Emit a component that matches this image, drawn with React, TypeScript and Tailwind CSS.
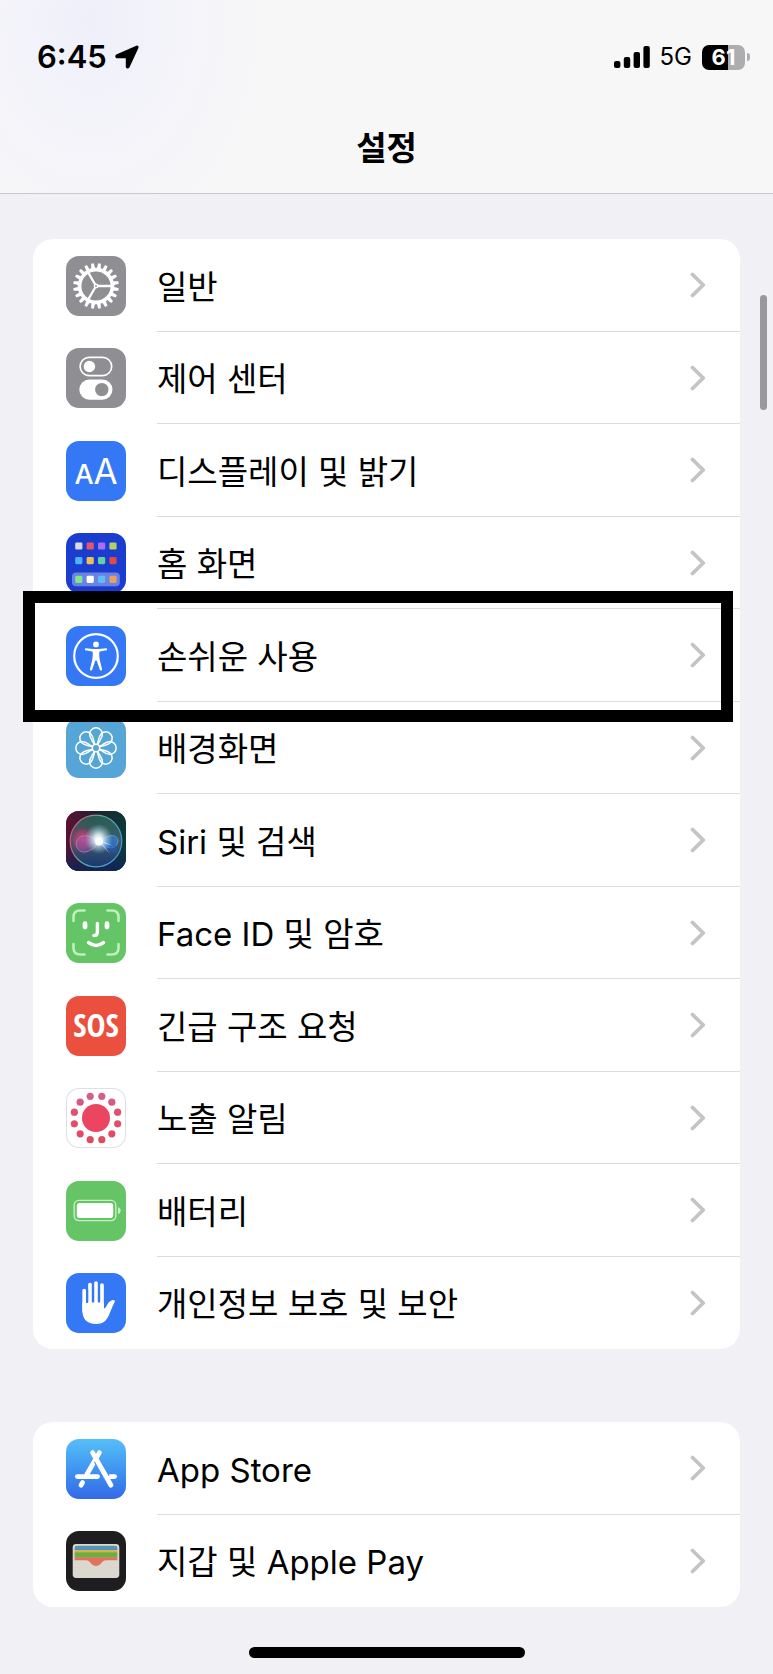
import type { ReactNode } from 'react'

const tile = 'block size-[60px] shrink-0 rounded-[13px]'

function GearIcon() {
  const teeth = Array.from({ length: 20 }, (_, i) => i * 18 + 9)
  return (
    <svg viewBox="0 0 60 60" className={`${tile} bg-[#8e8e93]`} aria-hidden="true">
      {teeth.map((a) => (
        <path key={a} d="M27.9 13.4 L28.7 7.2 H31.3 L32.1 13.4 Z" fill="#fff" transform={`rotate(${a} 30 30)`} />
      ))}
      <circle cx="30" cy="30" r="16.4" fill="none" stroke="#fff" strokeWidth="3.6" />
      {[0, 120, 240].map((a) => (
        <path key={a} d="M30 30 H46" stroke="#fff" strokeWidth="2.3" transform={`rotate(${a} 30 30)`} />
      ))}
      <circle cx="30" cy="30" r="2.4" fill="#fff" />
      <circle cx="30" cy="30" r="0.9" fill="#8e8e93" />
    </svg>
  )
}

function ControlCenterIcon() {
  return (
    <svg viewBox="0 0 60 60" className={`${tile} bg-[#8e8e93]`} aria-hidden="true">
      <rect x="14.1" y="9.3" width="31.6" height="18.4" rx="9.2" fill="none" stroke="#fff" strokeWidth="1.7" />
      <circle cx="23.4" cy="18.5" r="5.7" fill="#fff" />
      <rect x="13.3" y="31.5" width="33.2" height="20.2" rx="10.1" fill="#fff" />
      <circle cx="35.8" cy="41.6" r="6.7" fill="#8e8e93" />
    </svg>
  )
}

function DisplayIcon() {
  return (
    <svg viewBox="0 0 60 60" className={`${tile} bg-[#3478f6]`} aria-hidden="true">
      <g fill="#fff" fontFamily="Inter, sans-serif" textAnchor="middle">
        <text x="18" y="43" fontSize="27" fontWeight="500">A</text>
        <text x="39.5" y="43" fontSize="35" fontWeight="400">A</text>
      </g>
    </svg>
  )
}

function HomeScreenIcon() {
  const rows = [
    { y: 9.4, colors: ['#d9d9df', '#e9536c', '#a86df5', '#b3d061'] },
    { y: 24, colors: ['#4db2f8', '#f3bd55', '#62d0a4', '#e04a43'] },
    { y: 42.7, colors: ['#81e68c', '#ffffff', '#5cbdf8', '#eb9d66'] },
  ]
  return (
    <svg viewBox="0 0 60 60" className={`${tile} bg-[#1a3dd0]`} aria-hidden="true">
      <rect x="6" y="39.6" width="47.8" height="13.6" rx="4" fill="#6a83e3" />
      {rows.map((row) =>
        row.colors.map((color, i) => (
          <rect key={color} x={9.2 + i * 11.4} y={row.y} width="7.2" height="7.2" rx="1.4" fill={color} />
        )),
      )}
    </svg>
  )
}

function AccessibilityIcon() {
  return (
    <svg viewBox="0 0 60 60" className={`${tile} bg-[#3478f6]`} aria-hidden="true">
      <circle cx="30" cy="30" r="21.8" fill="none" stroke="#fff" strokeWidth="2.2" />
      <circle cx="30" cy="18.4" r="2.9" fill="#fff" />
      <path
        d="M19.8 22.2 L27.5 23 H32.5 L40.2 22.2 A1.1 1.1 0 0 1 40.5 24.3 L34 25.4 Q33.2 25.6 33.2 27 Q33.2 31 33.8 34 L36 43 A1.1 1.1 0 0 1 33.8 43.7 L30.8 35 Q30 33.6 29.2 35 L26.2 43.7 A1.1 1.1 0 0 1 24 43 L26.2 34 Q26.8 31 26.8 27 Q26.8 25.6 26 25.4 L19.5 24.3 A1.1 1.1 0 0 1 19.8 22.2 Z"
        fill="#fff"
      />
    </svg>
  )
}

function WallpaperIcon() {
  const petals = [0, 45, 90, 135, 180, 225, 270, 315]
  return (
    <svg viewBox="0 0 60 60" className={`${tile} bg-[#55a5d6]`} aria-hidden="true">
      <g fill="none" stroke="#fff" strokeWidth="1.5">
        {petals.map((a) => (
          <path
            key={a}
            d="M28.4 26.6 C26.6 22.8 23.6 20 23.6 16.2 A6.4 6.4 0 0 1 36.4 16.2 C36.4 20 33.4 22.8 31.6 26.6"
            transform={`rotate(${a} 30 30)`}
          />
        ))}
        <circle cx="30" cy="30" r="3.7" />
      </g>
    </svg>
  )
}

function SiriIcon() {
  return (
    <svg viewBox="0 0 60 60" className={`${tile} bg-[#1b1b33]`} aria-hidden="true">
      <defs>
        <linearGradient id="siri-bg" x1="0" y1="0" x2="1" y2="0.15">
          <stop offset="0" stopColor="#620f33" />
          <stop offset="0.5" stopColor="#20202f" />
          <stop offset="1" stopColor="#0b3a38" />
        </linearGradient>
        <linearGradient id="siri-floor" x1="0" y1="0" x2="0" y2="1">
          <stop offset="0.6" stopColor="#10245c" stopOpacity="0" />
          <stop offset="1" stopColor="#10245c" stopOpacity="0.9" />
        </linearGradient>
        <linearGradient id="siri-ring" x1="0" y1="0.3" x2="1" y2="0.7">
          <stop offset="0" stopColor="#d2557c" />
          <stop offset="0.4" stopColor="#5fae98" />
          <stop offset="1" stopColor="#4b8fdc" />
        </linearGradient>
        <linearGradient id="siri-orb" x1="0" y1="0" x2="0" y2="1">
          <stop offset="0" stopColor="#2b6f5c" />
          <stop offset="0.5" stopColor="#4b6a7c" />
          <stop offset="1" stopColor="#1a3f7c" />
        </linearGradient>
        <radialGradient id="siri-pink">
          <stop offset="0" stopColor="#e64a86" stopOpacity="0.95" />
          <stop offset="0.6" stopColor="#c93a70" stopOpacity="0.6" />
          <stop offset="1" stopColor="#a02a5c" stopOpacity="0" />
        </radialGradient>
        <radialGradient id="siri-glow">
          <stop offset="0" stopColor="#fff" />
          <stop offset="0.3" stopColor="#eefcff" stopOpacity="0.85" />
          <stop offset="1" stopColor="#9fd8e8" stopOpacity="0" />
        </radialGradient>
      </defs>
      <rect width="60" height="60" fill="url(#siri-bg)" />
      <rect width="60" height="60" fill="url(#siri-floor)" />
      <circle cx="30" cy="30" r="25.8" fill="url(#siri-orb)" fillOpacity="0.75" stroke="url(#siri-ring)" strokeWidth="1.2" />
      <ellipse cx="17" cy="29" rx="13" ry="14" fill="url(#siri-pink)" />
      <path d="M33 31 C24 22 11 23 10 33 C12 45 25 43 33 31 Z" fill="#8058b4" fillOpacity="0.45" stroke="#d68ab8" strokeWidth="0.6" />
      <path d="M33 31 C41 23 51 22 52 30 C50 40 41 38 33 31 Z" fill="#2f83e6" fillOpacity="0.6" stroke="#6fb8ee" strokeWidth="0.6" />
      <path d="M34 31 C38 38 45 44 50 41 C53 36 50 32 34 31 Z" fill="#2257c9" fillOpacity="0.5" />
      <ellipse cx="32.5" cy="28" rx="14" ry="15" fill="url(#siri-glow)" />
      <path d="M33 31 L44 43 L36 32 L48 35 L34 29 Z" fill="#d6ecff" fillOpacity="0.6" />
      <circle cx="33" cy="30.5" r="4" fill="#fff" fillOpacity="0.85" />
    </svg>
  )
}

function FaceIdIcon() {
  return (
    <svg viewBox="0 0 60 60" className={`${tile} bg-[#65c466]`} aria-hidden="true">
      <g fill="none" strokeLinecap="round">
        <g stroke="#bdf0bd" strokeWidth="2.6">
          <path d="M7.5 18 V14 Q7.5 7.5 14 7.5 H18.5" />
          <path d="M41.5 7.5 H46 Q52.5 7.5 52.5 14 V18" />
          <path d="M52.5 41 V45 Q52.5 51.5 46 51.5 H41.5" />
          <path d="M18.5 51.5 H14 Q7.5 51.5 7.5 45 V41" />
        </g>
        <g stroke="#fff">
          <path d="M19 20.7 V24" strokeWidth="4.8" />
          <path d="M41 20.7 V24" strokeWidth="4.8" />
          <path d="M31.4 20.5 V29.2 Q31.4 32.6 27.8 32.6" strokeWidth="3.4" />
          <path d="M22.6 39.6 Q30 45.4 37.4 39.6" strokeWidth="3.5" />
        </g>
      </g>
    </svg>
  )
}

function SosIcon() {
  return (
    <svg viewBox="0 0 60 60" className={`${tile} bg-[#eb4f3d]`} aria-hidden="true">
      <text
        x="30"
        y="41"
        fill="#fff"
        fontFamily="'Liberation Sans Narrow', 'Open Sans Condensed', 'Roboto Condensed', Roboto, sans-serif"
        fontSize="32"
        fontWeight="700"
        textAnchor="middle"
      >
        SOS
      </text>
    </svg>
  )
}

function ExposureIcon() {
  const dots = Array.from({ length: 12 }, (_, i) => ((i * 30 + 15) * Math.PI) / 180)
  return (
    <svg viewBox="0 0 60 60" className={`${tile} bg-white ring-1 ring-[#dfdfe2] ring-inset`} aria-hidden="true">
      <defs>
        <linearGradient id="exposure" gradientUnits="userSpaceOnUse" x1="0" y1="5" x2="0" y2="55">
          <stop offset="0" stopColor="#d4608c" />
          <stop offset="0.4" stopColor="#e05070" />
          <stop offset="1" stopColor="#e04a60" />
        </linearGradient>
      </defs>
      <g fill="url(#exposure)">
        <circle cx="30" cy="30" r="14" fill="#ec4560" />
        {dots.map((a) => (
          <circle key={a} cx={30 + Math.cos(a) * 22.4} cy={30 + Math.sin(a) * 22.4} r="3.6" />
        ))}
      </g>
    </svg>
  )
}

function BatteryTileIcon() {
  return (
    <svg viewBox="0 0 60 60" className={`${tile} bg-[#65c466]`} aria-hidden="true">
      <rect x="8.2" y="19.4" width="41.6" height="20.2" rx="4.8" fill="none" stroke="#c6f0c4" strokeWidth="1.4" />
      <rect x="10.8" y="22" width="36.4" height="15" rx="2.8" fill="#fff" />
      <path d="M52 26 Q54.8 27 54.8 29.6 Q54.8 32.2 52 33.2 Z" fill="#c6f0c4" />
    </svg>
  )
}

function PrivacyIcon() {
  return (
    <svg viewBox="0 0 60 60" className={`${tile} bg-[#3478f6]`} aria-hidden="true">
      <g fill="none" stroke="#fff" strokeWidth="3.7" strokeLinecap="round">
        <path d="M18.2 17.6 V38" />
        <path d="M24 11.5 V36" />
        <path d="M30 10 V36" />
        <path d="M36 12 V36" />
      </g>
      <path
        d="M16.35 29.5 H37.85 V35.5 C38.8 35.5 39.6 34.8 40.2 33.6 C41.4 31 43 28 46.2 27.2 C48 26.8 49.4 27.6 48.8 28.8 C46.5 33 45 37.5 43 42 C40.6 47.8 36.6 51 30.2 51 C21 51 16.35 46 16.35 37 Z"
        fill="#fff"
      />
      <g stroke="#3478f6" strokeWidth="2.2" strokeLinecap="round">
        <path d="M21.1 17 V29" />
        <path d="M27 14 V28" />
        <path d="M33 14 V28" />
      </g>
    </svg>
  )
}

function AppStoreIcon() {
  return (
    <svg viewBox="0 0 60 60" className={`${tile} bg-linear-to-b from-[#56bff8] to-[#3369e7]`} aria-hidden="true">
      <g fill="none" stroke="#fff" strokeWidth="4.8" strokeLinecap="round">
        <path d="M33.4 13.6 L20.8 35.5" />
        <path d="M11.4 37.6 H31.5" />
        <path d="M42.5 37.6 H48.6" />
        <path d="M16.6 43.6 L15 46.2" />
      </g>
      <path d="M31 21.4 L40.5 38.3" stroke="#4796f0" strokeWidth="7" />
      <path d="M26.6 13.6 L45 46.2" stroke="#fff" strokeWidth="4.8" strokeLinecap="round" />
    </svg>
  )
}

function WalletIcon() {
  return (
    <svg viewBox="0 0 60 60" className={`${tile} bg-[#1e1e20]`} aria-hidden="true">
      <rect x="6.7" y="13" width="46.6" height="34" rx="3.4" fill="#dad8cf" />
      <path d="M8.6 19 V17 Q8.6 14.8 10.8 14.8 H49.2 Q51.4 14.8 51.4 17 V19 Z" fill="#5693b8" />
      <rect x="8.6" y="19" width="42.8" height="3.6" fill="#d0b453" />
      <rect x="8.6" y="21.4" width="42.8" height="5.4" fill="#6fae3e" />
      <path
        d="M8.6 26.4 H51.4 V29.2 H40.5 C37.5 29.2 36.6 30.4 35.4 32 C32.2 36 27.8 36 24.6 32 C23.4 30.4 22.5 29.2 19.5 29.2 H8.6 Z"
        fill="#e3715f"
      />
    </svg>
  )
}

function Chevron() {
  return (
    <svg viewBox="0 0 16 26" className="h-[26px] w-4 shrink-0" aria-hidden="true">
      <path d="M2.5 2.5 L13.2 13 L2.5 23.5" fill="none" stroke="#c4c4c7" strokeWidth="3.8" strokeLinecap="round" strokeLinejoin="round" />
    </svg>
  )
}

type Item = { label: string; icon: ReactNode; highlighted?: boolean }

const systemItems: Item[] = [
  { label: '일반', icon: <GearIcon /> },
  { label: '제어 센터', icon: <ControlCenterIcon /> },
  { label: '디스플레이 및 밝기', icon: <DisplayIcon /> },
  { label: '홈 화면', icon: <HomeScreenIcon /> },
  { label: '손쉬운 사용', icon: <AccessibilityIcon />, highlighted: true },
  { label: '배경화면', icon: <WallpaperIcon /> },
  { label: 'Siri 및 검색', icon: <SiriIcon /> },
  { label: 'Face ID 및 암호', icon: <FaceIdIcon /> },
  { label: '긴급 구조 요청', icon: <SosIcon /> },
  { label: '노출 알림', icon: <ExposureIcon /> },
  { label: '배터리', icon: <BatteryTileIcon /> },
  { label: '개인정보 보호 및 보안', icon: <PrivacyIcon /> },
]

const storeItems: Item[] = [
  { label: 'App Store', icon: <AppStoreIcon /> },
  { label: '지갑 및 Apple Pay', icon: <WalletIcon /> },
]

function SettingsGroup({ items }: { items: Item[] }) {
  return (
    <ul className="rounded-[20px] bg-white">
      {items.map((item) => (
        <li key={item.label} className="group relative odd:h-[93px] even:h-[92px]">
          <a href="#" className="flex h-full items-center gap-[31px] pl-[33px]">
            {item.icon}
            <span className="flex h-full flex-1 items-center justify-between border-b border-[#dcdcde] pr-[34px] group-last:border-transparent">
              <span className="pt-[3px] text-[33px] leading-10">{item.label}</span>
              <Chevron />
            </span>
          </a>
          {item.highlighted && (
            <div className="pointer-events-none absolute -top-[18px] right-[7px] -bottom-5 -left-2.5 z-10 border-12 border-black" />
          )}
        </li>
      ))}
    </ul>
  )
}

function StatusBar() {
  return (
    <div className="flex items-center justify-between pr-[23px] pl-[37px]">
      <div className="flex items-center gap-2">
        <span className="text-[31px] leading-10 font-semibold">6:45</span>
        <svg viewBox="0 0 24 24" className="size-6" aria-hidden="true">
          <path
            d="M21.6 1.4 L1.6 10.2 Q0.6 11.2 1.6 12.4 H10.6 Q11.6 12.4 11.6 13.4 V22 Q12.6 23.4 13.8 22 L22.7 2.6 Q23 1 21.6 1.4 Z"
            stroke="#000"
            strokeWidth="1.6"
            strokeLinejoin="round"
          />
        </svg>
      </div>
      <div className="flex items-center">
        <svg viewBox="0 0 36 22" className="h-[22px] w-9" aria-hidden="true">
          <rect x="0" y="15" width="6.4" height="7" rx="2" />
          <rect x="9.8" y="11" width="6.4" height="11" rx="2" />
          <rect x="19.6" y="6" width="6.4" height="16" rx="2" />
          <rect x="29.4" y="0" width="6.4" height="22" rx="2" />
        </svg>
        <span className="ml-2.5 text-2xl leading-10">5G</span>
        <div className="ml-2.5 flex h-[25px] w-[43px] items-center justify-center rounded-[7px] bg-linear-to-r from-black from-61% to-[#adadaf] to-61%">
          <span className="text-[22px] leading-6 font-bold text-white">61</span>
        </div>
        <div className="ml-0.5 h-2 w-[3px] rounded-r-full bg-[#adadaf]" />
      </div>
    </div>
  )
}

export default function App() {
  return (
    <div className="relative min-h-screen bg-[#f0f0f5] font-[Inter,'Noto_Sans_CJK_KR',sans-serif] text-black">
      <header className="border-b border-[#c9c9cc] bg-[#f7f7f8] bg-[radial-gradient(ellipse_180px_240px_at_90px_20px,#efeffa,#f5f5fa_60%,transparent)] pt-[37px] pb-[25px]">
        <StatusBar />
        <h1 className="mt-[51px] text-center text-[33px] leading-10 font-bold">설정</h1>
      </header>

      <main className="flex flex-col gap-[73px] px-[33px] pt-[45px]">
        <SettingsGroup items={systemItems} />
        <SettingsGroup items={storeItems} />
      </main>

      <div className="mx-auto mt-10 h-[11px] w-[276px] rounded-full bg-black" />
      <div className="h-4" />

      {/* scroll indicator */}
      <div className="absolute top-[295px] right-1.5 h-[115px] w-[7px] rounded-full bg-[#98989d]" />
    </div>
  )
}
